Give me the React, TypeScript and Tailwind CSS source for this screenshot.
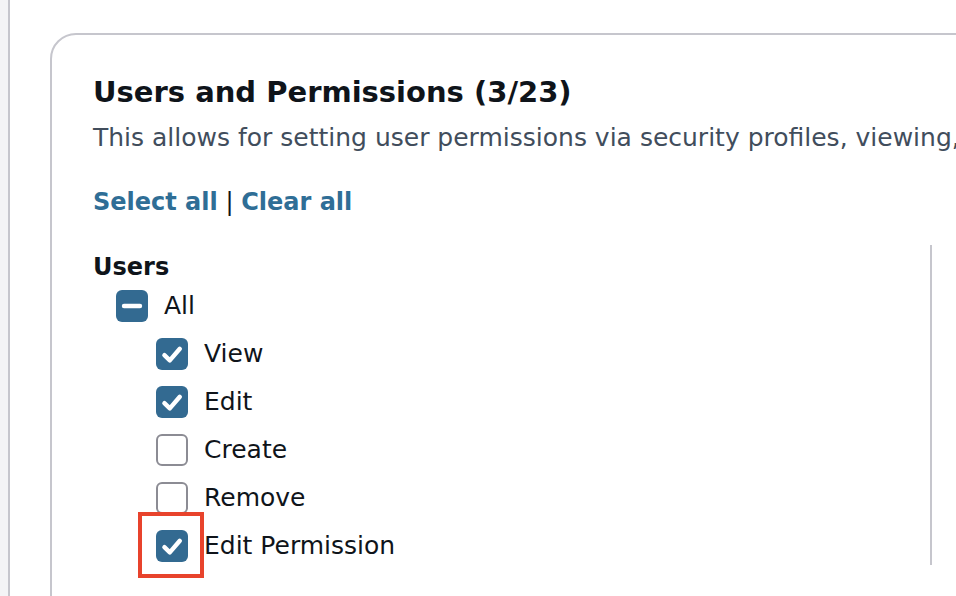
import React from "react";

type Perm = { label: string; checked: boolean; marked?: boolean };

const perms: Perm[] = [
  { label: "View", checked: true },
  { label: "Edit", checked: true },
  { label: "Create", checked: false },
  { label: "Remove", checked: false },
  { label: "Edit Permission", checked: true, marked: true },
];

const Box: React.FC<{ state: "on" | "off" | "mixed" }> = ({ state }) => {
  if (state === "off") {
    return <div className="w-8 h-8 shrink-0 rounded-md border-2 border-[#8c8c94] bg-white" />;
  }
  return (
    <div className="w-8 h-8 shrink-0 rounded-md bg-[#336a91] flex items-center justify-center">
      <svg viewBox="0 0 16 16" className="w-8 h-8" fill="none" stroke="white" strokeWidth="2.2" strokeLinecap="round" strokeLinejoin="round">
        {state === "on" ? <polyline points="4.2,8.6 6.9,11.2 11.9,5.4" /> : <line x1="4" y1="8" x2="12" y2="8" />}
      </svg>
    </div>
  );
};

export default function App() {
  return (
    <div className="w-full h-[596px] flex overflow-hidden bg-white" style={{ fontFamily: '"DejaVu Sans", "Open Sans", sans-serif' }}>
      {/* left rail */}
      <div className="w-[10px] shrink-0 bg-[#f4f4f6] border-r-2 border-[#c6c6cd]" />
      <div className="flex-1 pl-[40px] pt-[33px] overflow-hidden">
        <div className="w-[1000px] h-[700px] border-2 border-[#c6c6cd] rounded-tl-[26px] pl-[41px] pt-[37px] overflow-hidden">
          <h2 className="text-[29px] leading-[40px] font-bold text-[#0f141a] whitespace-nowrap">
            Users and Permissions (3/23)
          </h2>
          <p className="mt-[10px] text-[25px] leading-[32px] text-[#414d5c] whitespace-nowrap">
            This allows for setting user permissions via security profiles, viewing, editing and deleting users.
          </p>
          <div className="mt-[32px] text-[24px] leading-[32px] whitespace-nowrap">
            <span className="font-bold text-[#2f6e96]">Select all</span>
            <span className="text-[#0f141a]"> | </span>
            <span className="font-bold text-[#2f6e96]">Clear all</span>
          </div>
          <div className="mt-[27px] flex items-start">
            <div className="w-[837px] shrink-0 pt-[6px] text-[25px] text-[#0f141a]">
              <div className="leading-[32px] text-[24px] font-bold">Users</div>
              <div className="h-12 mt-[-1px] flex items-center gap-4 pl-[23px]">
                <Box state="mixed" />
                <span>All</span>
              </div>
              {perms.map((p) => (
                <div key={p.label} className="h-12 flex items-center gap-4 pl-[63px]">
                  <div className="relative">
                    <Box state={p.checked ? "on" : "off"} />
                    {p.marked && (
                      <div className="absolute left-[-18px] top-[-18px] w-[66px] h-[66px] border-4 border-[#e8432c]" />
                    )}
                  </div>
                  <span>{p.label}</span>
                </div>
              ))}
            </div>
            <div className="w-[2px] h-[320px] bg-[#c6c6cd]" />
          </div>
        </div>
      </div>
    </div>
  );
}
